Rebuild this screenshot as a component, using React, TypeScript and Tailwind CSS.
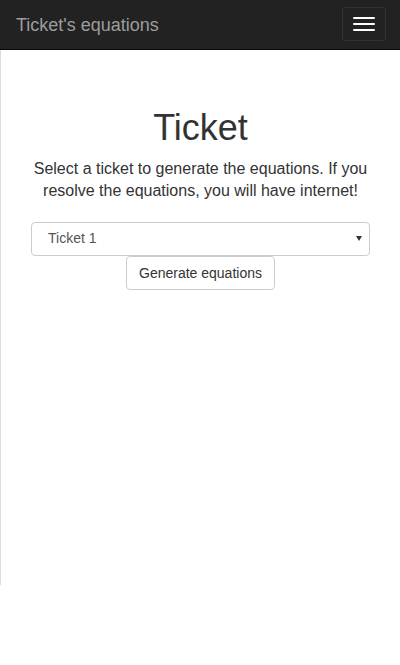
import React from "react";

export default function App() {
  return (
    <div
      className="w-[400px] h-[665px] bg-white text-[#333]"
      style={{ fontFamily: '"Liberation Sans", Arial, sans-serif' }}
    >
      <nav className="h-[50px] bg-[#222] border-b border-[#080808] flex items-start justify-between">
        <div className="pl-[16px] pt-[15px] text-[18px] leading-[20px] text-[#9d9d9d]">
          Ticket's equations
        </div>
        <div className="mt-[7px] mr-[14px] w-[44px] h-[34px] border border-[#333] rounded-[4px] flex flex-col items-center justify-center gap-[4px]">
          <span className="block w-[22px] h-[2px] bg-white rounded-[1px]" />
          <span className="block w-[22px] h-[2px] bg-white rounded-[1px]" />
          <span className="block w-[22px] h-[2px] bg-white rounded-[1px]" />
        </div>
      </nav>
      <main className="h-[535px] border-l border-[#ddd] px-[30px] pt-[58px] flex flex-col items-center">
        <h1 className="text-[36px] leading-[39.6px] font-normal text-[#333]">Ticket</h1>
        <p className="mt-[10px] text-[16px] leading-[22px] text-center text-[#333]">
          Select a ticket to generate the equations. If you resolve the equations, you will have internet!
        </p>
        <div className="mt-[20px] w-full h-[34px] border border-[#ccc] rounded-[4px] flex items-center justify-between pl-[16px] pr-[7px] text-[14px] text-[#555] bg-white">
          <span>Ticket 1</span>
          <svg width="6" height="5" viewBox="0 0 6 5">
            <path d="M0 0 H6 L3 5 Z" fill="#333" />
          </svg>
        </div>
        <button className="h-[34px] px-[12px] border border-[#ccc] rounded-[4px] bg-white text-[14px] text-[#333] leading-[20px]">
          Generate equations
        </button>
      </main>
    </div>
  );
}
